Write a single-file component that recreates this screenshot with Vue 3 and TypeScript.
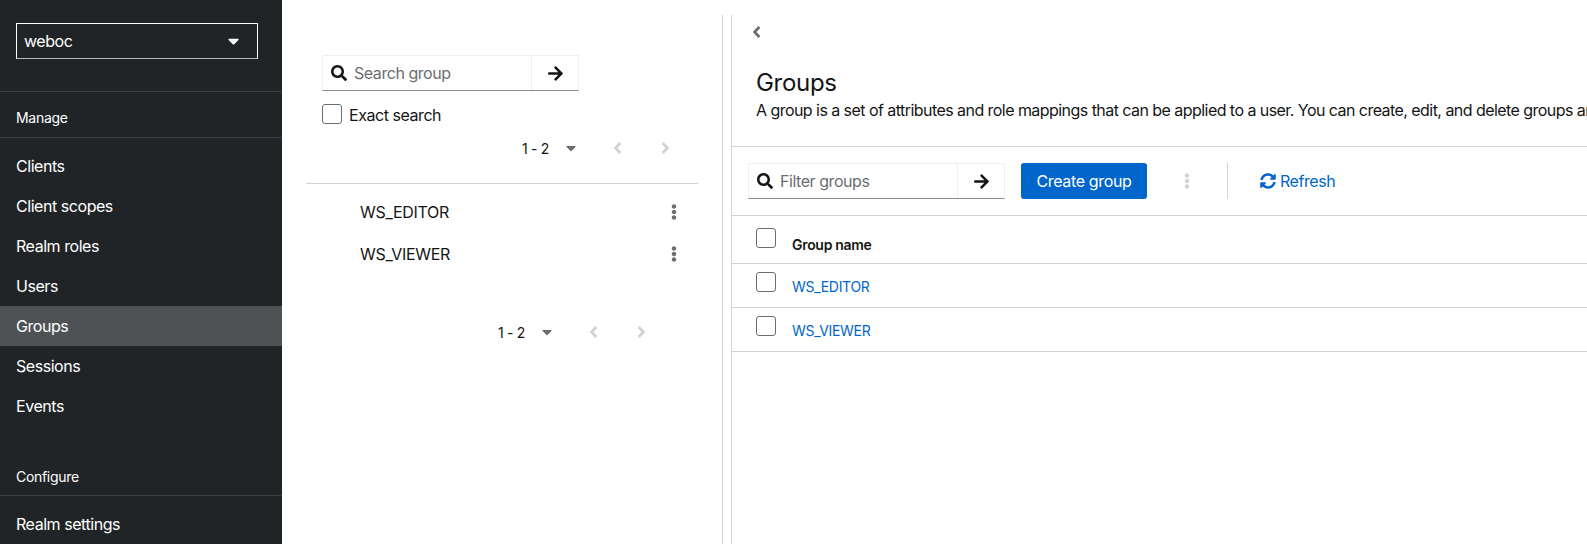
<script setup lang="ts">
const icons = {
  search: 'M505 442.7L405.3 343c-4.5-4.5-10.6-7-17-7H372c27.6-35.3 44-79.7 44-128C416 93.1 322.9 0 208 0S0 93.1 0 208s93.1 208 208 208c48.3 0 92.7-16.4 128-44v16.3c0 6.4 2.5 12.5 7 17l99.7 99.7c9.4 9.4 24.6 9.4 33.9 0l28.3-28.3c9.4-9.4 9.4-24.6.1-34zM208 336c-70.7 0-128-57.2-128-128 0-70.7 57.2-128 128-128 70.7 0 128 57.2 128 128 0 70.7-57.2 128-128 128z',
  arrow: 'M190.5 66.9l22.2-22.2c9.4-9.4 24.6-9.4 33.9 0L441 239c9.4 9.4 9.4 24.6 0 33.9L246.6 467.3c-9.4 9.4-24.6 9.4-33.9 0l-22.2-22.2c-9.5-9.5-9.3-25 .4-34.3L311.4 296H24c-13.3 0-24-10.7-24-24v-32c0-13.3 10.7-24 24-24h287.4L190.9 101.2c-9.8-9.3-10-24.8-.4-34.3z',
  sync: 'M370.72 133.28C339.458 104.008 298.888 87.962 255.848 88c-77.458.068-144.328 53.178-162.791 126.85-1.344 5.363-6.122 9.15-11.651 9.15H24.103c-7.498 0-13.194-6.807-11.807-14.176C33.933 94.924 134.813 8 256 8c66.448 0 126.791 26.136 171.315 68.685L463.03 40.97C478.149 25.851 504 36.559 504 57.941V192c0 13.255-10.745 24-24 24H345.941c-21.382 0-32.09-25.851-16.971-40.971l41.75-41.749zM32 296h134.059c21.382 0 32.09 25.851 16.971 40.971l-41.75 41.75c31.262 29.273 71.835 45.319 114.876 45.28 77.418-.07 144.315-53.144 162.787-126.849 1.344-5.363 6.122-9.15 11.651-9.15h57.304c7.498 0 13.194 6.807 11.807 14.176C478.067 417.076 377.187 504 256 504c-66.448 0-126.791-26.136-171.315-68.685L48.97 471.03C33.851 486.149 8 475.441 8 454.059V320c0-13.255 10.745-24 24-24z',
  left: 'M31.7 239l136-136c9.4-9.4 24.6-9.4 33.9 0l22.6 22.6c9.4 9.4 9.4 24.6 0 33.9L127.9 256l96.4 96.4c9.4 9.4 9.4 24.6 0 33.9L201.7 409c-9.4 9.4-24.6 9.4-33.9 0l-136-136c-9.5-9.4-9.5-24.6-.1-34z',
  right: 'M224.3 273l-136 136c-9.4 9.4-24.6 9.4-33.9 0l-22.6-22.6c-9.4-9.4-9.4-24.6 0-33.9l96.4-96.4-96.4-96.4c-9.4-9.4-9.4-24.6 0-33.9L54.3 103c9.4-9.4 24.6-9.4 33.9 0l136 136c9.5 9.4 9.5 24.6.1 34z',
  caret: 'M31.3 192h257.3c17.8 0 26.7 21.5 14.1 34.1L174.1 354.8c-7.8 7.8-20.5 7.8-28.3 0L17.2 226.1C4.6 213.5 13.5 192 31.3 192z',
  kebab: 'M96 184c39.8 0 72 32.2 72 72s-32.2 72-72 72-72-32.2-72-72 32.2-72 72-72zM24 80c0 39.8 32.2 72 72 72s72-32.2 72-72S135.8 8 96 8 24 40.2 24 80zm0 352c0 39.8 32.2 72 72 72s72-32.2 72-72-32.2-72-72-72-72 32.2-72 72z',
}

const manageItems = ['Clients', 'Client scopes', 'Realm roles', 'Users', 'Groups', 'Sessions', 'Events']
const groups = ['WS_EDITOR', 'WS_VIEWER']
</script>

<template>
  <div class="page">
    <aside class="sidebar">
      <div class="realm-wrap">
        <div class="realm">
          <span>weboc</span>
          <svg class="realm-caret" viewBox="0 0 320 512"><path :d="icons.caret" /></svg>
        </div>
      </div>
      <div class="nav-title manage">Manage</div>
      <nav class="nav-list">
        <a v-for="item in manageItems" :key="item" class="nav-item" :class="{ active: item === 'Groups' }">{{ item }}</a>
      </nav>
      <div class="nav-title configure">Configure</div>
      <nav class="nav-list">
        <a class="nav-item">Realm settings</a>
      </nav>
    </aside>

    <main class="content">
      <section class="tree-panel">
        <div class="tree-tools">
          <div class="search">
            <div class="search-input">
              <svg class="search-icon" viewBox="0 0 512 512"><path :d="icons.search" /></svg>
              <span class="placeholder">Search group</span>
            </div>
            <div class="search-btn">
              <svg class="arrow-icon" viewBox="0 0 448 512"><path :d="icons.arrow" /></svg>
            </div>
          </div>
          <label class="exact">
            <span class="checkbox"></span>
            <span class="exact-label">Exact search</span>
          </label>
          <div class="pager pager-top">
            <span class="pager-text">1 - 2</span>
            <svg class="pager-caret" viewBox="0 0 320 512"><path :d="icons.caret" /></svg>
            <svg class="pager-angle" viewBox="0 0 256 512"><path :d="icons.left" /></svg>
            <svg class="pager-angle next" viewBox="0 0 256 512"><path :d="icons.right" /></svg>
          </div>
        </div>
        <div class="tree-list">
          <div v-for="g in groups" :key="g" class="tree-row">
            <span>{{ g }}</span>
            <svg class="tree-kebab" viewBox="0 0 192 512"><path :d="icons.kebab" /></svg>
          </div>
        </div>
        <div class="pager pager-bottom">
          <span class="pager-text">1 - 2</span>
          <svg class="pager-caret" viewBox="0 0 320 512"><path :d="icons.caret" /></svg>
          <svg class="pager-angle" viewBox="0 0 256 512"><path :d="icons.left" /></svg>
          <svg class="pager-angle next" viewBox="0 0 256 512"><path :d="icons.right" /></svg>
        </div>
      </section>

      <section class="detail">
        <svg class="back" viewBox="0 0 256 512"><path :d="icons.left" /></svg>
        <header class="head">
          <h1>Groups</h1>
          <p>A group is a set of attributes and role mappings that can be applied to a user. You can create, edit, and delete groups and manage their child-parent organization.</p>
        </header>
        <div class="toolbar">
          <div class="search">
            <div class="search-input">
              <svg class="search-icon" viewBox="0 0 512 512"><path :d="icons.search" /></svg>
              <span class="placeholder">Filter groups</span>
            </div>
            <div class="search-btn">
              <svg class="arrow-icon" viewBox="0 0 448 512"><path :d="icons.arrow" /></svg>
            </div>
          </div>
          <button class="create">Create group</button>
          <svg class="tool-kebab" viewBox="0 0 192 512"><path :d="icons.kebab" /></svg>
          <span class="tool-sep"></span>
          <a class="refresh">
            <svg class="refresh-icon" viewBox="0 0 512 512"><path :d="icons.sync" /></svg>
            <span>Refresh</span>
          </a>
        </div>
        <div class="table">
          <div class="table-row table-head">
            <span class="checkbox"></span>
            <span class="col-name">Group name</span>
          </div>
          <div v-for="g in groups" :key="g" class="table-row">
            <span class="checkbox"></span>
            <a class="group-link">{{ g }}</a>
          </div>
        </div>
      </section>
    </main>
  </div>
</template>

<style>
html,
body {
  margin: 0;
  overflow: hidden;
  background: #fff;
}
</style>

<style scoped>
.page {
  display: flex;
  width: 1587px;
  height: 544px;
  overflow: hidden;
  font-family: Inter, 'Liberation Sans', sans-serif;
  font-size: 16px;
  letter-spacing: -0.45px;
  color: #151515;
}

.sidebar {
  width: 282px;
  flex-shrink: 0;
  background: #212427;
  color: #fff;
}

.realm-wrap {
  padding: 23px 24px 32px 16px;
  border-bottom: 1px solid #3c3f42;
}

.realm {
  display: flex;
  align-items: center;
  justify-content: space-between;
  box-sizing: border-box;
  height: 36px;
  padding: 0 18px 0 7px;
  border: 1px solid #fff;
  border-bottom-color: #b8bbbe;
}

.realm-caret {
  width: 11px;
  height: 18px;
  fill: #fff;
}

.nav-title {
  display: flex;
  align-items: center;
  padding-left: 16px;
  font-size: 14px;
  letter-spacing: -0.3px;
  border-bottom: 1px solid #3c3f42;
}

.manage {
  box-sizing: border-box;
  height: 46px;
  padding-top: 6px;
}

.configure {
  height: 37px;
  margin-top: 24px;
}

.nav-list {
  display: flex;
  flex-direction: column;
  padding: 8px 0;
}

.nav-item {
  display: flex;
  align-items: center;
  box-sizing: border-box;
  height: 40px;
  padding: 0 0 1px 16px;
}

.nav-item.active {
  background: #4f5255;
}

.content {
  flex: 1;
  min-width: 0;
  display: flex;
  gap: 8px;
  padding-top: 15px;
}

.tree-panel {
  box-sizing: border-box;
  width: 441px;
  flex-shrink: 0;
  padding: 40px 24px 0;
  border-right: 1px solid #d2d2d2;
}

.tree-tools {
  padding: 0 0 25px 16px;
  border-bottom: 1px solid #d2d2d2;
}

.search {
  display: flex;
  width: 257px;
  height: 36px;
  box-sizing: border-box;
  border: 1px solid #f0f0f0;
  border-bottom: 1px solid #8a8d90;
}

.search-input {
  flex: 1;
  display: flex;
  align-items: center;
  gap: 7px;
  padding-left: 8px;
  border-right: 1px solid #f0f0f0;
}

.search-icon {
  width: 16px;
  height: 16px;
  fill: #151515;
}

.placeholder {
  color: #6a6e73;
}

.search-btn {
  display: flex;
  align-items: center;
  justify-content: center;
  width: 46px;
}

.arrow-icon {
  width: 15px;
  height: 17px;
  fill: #151515;
}

.exact {
  display: flex;
  align-items: center;
  gap: 7px;
  margin-top: 12px;
}

.exact-label {
  padding-top: 2px;
}

.checkbox {
  display: block;
  box-sizing: border-box;
  width: 20px;
  height: 20px;
  flex-shrink: 0;
  background: #fff;
  border: 1px solid #6a6e73;
  border-radius: 3px;
}

.pager {
  display: flex;
  align-items: center;
  height: 20px;
}

.pager-top {
  margin: 13px 0 0 200px;
}

.pager-bottom {
  margin: 47px 0 0 192px;
}

.pager-text {
  width: 44px;
  font-size: 14px;
  letter-spacing: -0.3px;
  white-space: nowrap;
}

.pager-caret {
  width: 10px;
  height: 16px;
  fill: #6a6e73;
  margin-right: 37px;
}

.pager-angle {
  width: 9px;
  height: 18px;
  fill: #d2d2d2;
}

.pager-angle.next {
  margin-left: 39px;
}

.tree-list {
  padding-top: 7px;
}

.tree-row {
  display: flex;
  align-items: center;
  justify-content: space-between;
  height: 42px;
  padding: 0 21px 0 54px;
  letter-spacing: -0.3px;
}

.tree-kebab {
  width: 6px;
  height: 16px;
  fill: #6a6e73;
}

.detail {
  flex: 1;
  min-width: 0;
  position: relative;
  border-left: 1px solid #d2d2d2;
}

.back {
  position: absolute;
  left: 20px;
  top: 8px;
  width: 9px;
  height: 18px;
  fill: #6a6e73;
}

.head {
  box-sizing: border-box;
  height: 132px;
  padding: 53px 0 0 24px;
  border-bottom: 1px solid #d2d2d2;
  overflow: hidden;
}

.head h1 {
  margin: 0;
  font-size: 24px;
  font-weight: 400;
  line-height: 29px;
  letter-spacing: -0.3px;
}

.head p {
  margin: 1px 0 0;
  font-size: 16px;
  line-height: 24px;
  letter-spacing: -0.55px;
  white-space: nowrap;
}

.toolbar {
  display: flex;
  align-items: center;
  height: 69px;
  box-sizing: border-box;
  padding: 0 0 0 16px;
  border-bottom: 1px solid #d2d2d2;
}

.create {
  width: 126px;
  height: 36px;
  margin-left: 16px;
  border: 0;
  border-radius: 3px;
  background: #06c;
  color: #fff;
  font: inherit;
  letter-spacing: -0.35px;
}

.tool-kebab {
  width: 6px;
  height: 16px;
  fill: #d2d2d2;
  margin-left: 37px;
}

.tool-sep {
  width: 1px;
  height: 36px;
  background: #d2d2d2;
  margin-left: 37px;
}

.refresh {
  display: flex;
  align-items: center;
  gap: 4px;
  margin-left: 32px;
  color: #06c;
}

.refresh-icon {
  width: 16px;
  height: 16px;
  fill: #06c;
}

.table-row {
  display: flex;
  align-items: flex-start;
  gap: 16px;
  height: 44px;
  box-sizing: border-box;
  padding: 8px 0 0 24px;
  border-bottom: 1px solid #d2d2d2;
  font-size: 14px;
  letter-spacing: -0.3px;
}

.table-head {
  height: 48px;
  padding-top: 12px;
}

.col-name {
  font-weight: 600;
  line-height: 20px;
  padding-top: 7px;
}

.group-link {
  color: #06c;
  line-height: 20px;
  padding-top: 5px;
}
</style>
